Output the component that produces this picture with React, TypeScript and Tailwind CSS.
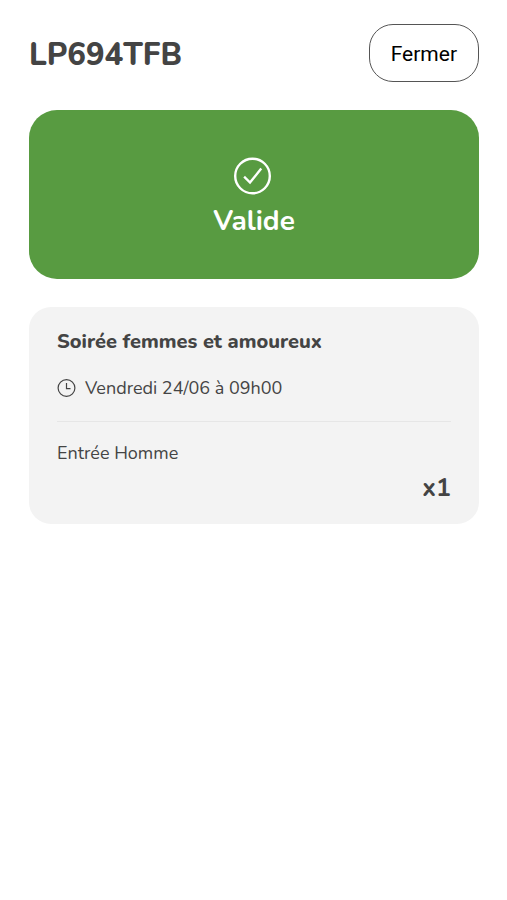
import React from "react";

export default function App() {
  return (
    <main className="min-h-screen bg-white pt-6 pr-7 pb-6 pl-[29px] font-['Nunito','Open_Sans',sans-serif] text-[#444444]">
      <header className="flex items-center justify-between">
        <h1 className="pt-1 text-[31px] leading-[40px] font-extrabold">LP694TFB</h1>
        <button
          type="button"
          className="h-[58px] rounded-[24px] border border-[#555555] bg-white px-[21px] pt-1 font-['Roboto',sans-serif] text-[21px] text-black"
        >
          Fermer
        </button>
      </header>

      <section className="mt-7 flex h-[169px] flex-col items-center justify-center rounded-[28px] bg-[#589b41] pt-1.5 text-white">
        <svg className="h-[38px] w-[42px]" viewBox="0 0 42 38" fill="none" stroke="currentColor" strokeWidth="2.4" aria-hidden="true">
          <circle cx="19.5" cy="19" r="17.3" />
          <path d="M12 20.5 17 25.5 27.5 12.5" strokeLinecap="square" />
        </svg>
        <p className="mt-2 text-[28px] leading-[36px] font-bold">Valide</p>
      </section>

      <section className="mt-7 rounded-[22px] bg-[#f3f3f3] px-7 pt-[22px] pb-[18px]">
        <h2 className="text-[20px] leading-[26px] font-extrabold">Soirée femmes et amoureux</h2>
        <p className="mt-5 flex items-center gap-[9px] text-[18px] leading-[26px]">
          <svg className="size-[19px]" viewBox="0 0 19 19" fill="none" stroke="currentColor" strokeWidth="1.2" aria-hidden="true">
            <circle cx="9.5" cy="9" r="8.4" />
            <path d="M9.5 4V9.6H13.5" />
          </svg>
          Vendredi 24/06 à 09h00
        </p>
        <hr className="mt-5 mb-[18px] border-[#e6e6e6]" />
        <p className="text-[18px] leading-[26px]">Entrée Homme</p>
        <p className="mt-1 text-right text-[25px] leading-[36px] font-bold">x1</p>
      </section>
    </main>
  );
}
